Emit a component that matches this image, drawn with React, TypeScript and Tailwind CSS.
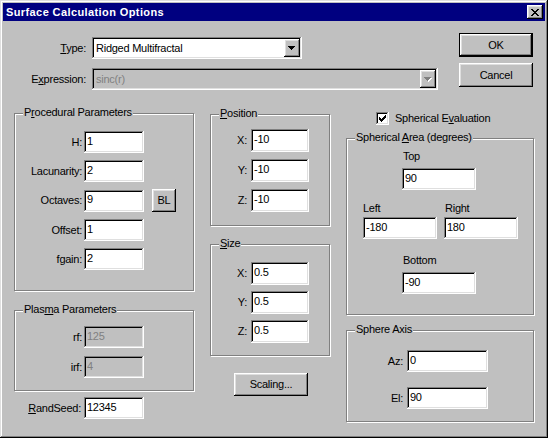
import React from 'react';

// Win95-style bevels
const raised =
  'bg-[#c0c0c0] shadow-[inset_-1px_-1px_0_#000,inset_1px_1px_0_#fff,inset_-2px_-2px_0_#808080,inset_2px_2px_0_#dfdfdf]';
const sunken =
  'shadow-[inset_-1px_-1px_0_#fff,inset_1px_1px_0_#808080,inset_-2px_-2px_0_#dfdfdf,inset_2px_2px_0_#000]';

function Field({ value, className = '', disabled = false }: { value: string; className?: string; disabled?: boolean }) {
  return (
    <div
      className={`${sunken} flex items-center pl-[3px] pb-[2px] leading-[13px] ${
        disabled ? 'bg-[#c0c0c0] text-[#808080]' : 'bg-white text-black'
      } ${className}`}
    >
      {value}
    </div>
  );
}

function Arrow({ disabled = false }: { disabled?: boolean }) {
  return (
    <svg width="8" height="5" shapeRendering="crispEdges">
      {disabled && <path fill="#fff" d="M1 1h7v1H1zM2 2h5v1H2zM3 3h3v1H3zM4 4h1v1H4z" />}
      <path fill={disabled ? '#808080' : '#000'} d="M0 0h7v1H0zM1 1h5v1H1zM2 2h3v1H2zM3 3h1v1H3z" />
    </svg>
  );
}

function Combo({ value, className = '', disabled = false }: { value: string; className?: string; disabled?: boolean }) {
  return (
    <div
      className={`${sunken} h-[22px] flex items-center p-[2px] ${
        disabled ? 'bg-[#c0c0c0] text-[#808080]' : 'bg-white text-black'
      } ${className}`}
    >
      <span className="flex-1 pl-[2px] leading-[13px]">{value}</span>
      <div className={`${raised} w-[16px] h-[18px] flex items-center justify-center`}>
        <Arrow disabled={disabled} />
      </div>
    </div>
  );
}

function Button({ children, className = '' }: { children: React.ReactNode; className?: string }) {
  return <div className={`${raised} flex items-center justify-center leading-[13px] ${className}`}>{children}</div>;
}

function Group({ title, className = '', children }: { title: React.ReactNode; className?: string; children?: React.ReactNode }) {
  return (
    <div className={`relative border border-[#808080] shadow-[inset_1px_1px_0_#fff,1px_1px_0_#fff] ${className}`}>
      <span className="absolute -top-[8px] left-[8px] bg-[#c0c0c0] px-[1px] leading-[13px] whitespace-nowrap">{title}</span>
      {children}
    </div>
  );
}

function Row({ label, labelClass, children }: { label: React.ReactNode; labelClass: string; children: React.ReactNode }) {
  return (
    <div className="flex items-center">
      <span className={`text-right leading-[13px] ${labelClass}`}>{label}</span>
      {children}
    </div>
  );
}

export default function App() {
  return (
    <div className="w-[548px] h-[438px] bg-[#c0c0c0] p-[3px] flex flex-col text-[11px] tracking-[-0.25px] text-black [font-family:'Liberation_Sans',Arial,sans-serif] shadow-[inset_-1px_-1px_0_#000,inset_1px_1px_0_#dfdfdf,inset_-2px_-2px_0_#808080,inset_2px_2px_0_#fff]">
      {/* title bar */}
      <div className="h-[18px] bg-[#000080] flex items-center justify-between pl-[3px] pr-[2px]">
        <span className="text-white font-bold leading-[13px] tracking-[0.4px]">Surface Calculation Options</span>
        <div className={`${raised} w-[16px] h-[14px] flex items-center justify-center`}>
          <svg width="8" height="7" shapeRendering="crispEdges">
            <path d="M0 0h2v1H0zM6 0h2v1H6zM1 1h2v1H1zM5 1h2v1H5zM2 2h4v1H2zM3 3h2v1H3zM2 4h4v1H2zM1 5h2v1H1zM5 5h2v1H5zM0 6h2v1H0zM6 6h2v1H6z" />
          </svg>
        </div>
      </div>

      {/* top section */}
      <div className="h-[85px] flex">
        <div className="ml-[11px] mt-[16px] flex flex-col gap-[9px]">
          <Row label={<><u>T</u>ype:</>} labelClass="w-[72px] mr-[6px]">
            <Combo value="Ridged Multifractal" className="w-[210px]" />
          </Row>
          <Row label={<>E<u>x</u>pression:</>} labelClass="w-[72px] mr-[6px]">
            <Combo value="sinc(r)" className="w-[346px]" disabled />
          </Row>
        </div>
        <div className="ml-[21px] mt-[12px] flex flex-col gap-[6px]">
          <div className="border border-black">
            <Button className="w-[72px] h-[22px]">OK</Button>
          </div>
          <Button className="w-[74px] h-[24px]">Cancel</Button>
        </div>
      </div>

      {/* main section */}
      <div className="flex ml-[11px] gap-[16px]">
        {/* column A */}
        <div className="w-[180px] flex flex-col">
          <Group title={<>P<u>r</u>ocedural Parameters</>} className="mt-[7px] h-[178px] pt-[17px]">
            <div className="flex flex-col gap-[7px]">
              <Row label="H:" labelClass="w-[69px] pr-[2px]">
                <Field value="1" className="w-[60px] h-[22px]" />
              </Row>
              <Row label="Lacunarity:" labelClass="w-[69px] pr-[2px]">
                <Field value="2" className="w-[60px] h-[22px]" />
              </Row>
              <Row label="Octaves:" labelClass="w-[69px] pr-[2px]">
                <Field value="9" className="w-[60px] h-[22px]" />
                <Button className="ml-[8px] w-[24px] h-[23px]">BL</Button>
              </Row>
              <Row label="Offset:" labelClass="w-[69px] pr-[2px]">
                <Field value="1" className="w-[60px] h-[22px]" />
              </Row>
              <Row label="fgain:" labelClass="w-[69px] pr-[2px]">
                <Field value="2" className="w-[60px] h-[22px]" />
              </Row>
            </div>
          </Group>
          <Group title={<>Plas<u>m</u>a Parameters</>} className="mt-[19px] h-[81px] pt-[15px]">
            <div className="flex flex-col gap-[8px]">
              <Row label="rf:" labelClass="w-[69px] pr-[2px]">
                <Field value="125" className="w-[60px] h-[22px]" disabled />
              </Row>
              <Row label="irf:" labelClass="w-[69px] pr-[2px]">
                <Field value="4" className="w-[60px] h-[22px]" disabled />
              </Row>
            </div>
          </Group>
          <div className="mt-[6px]">
            <Row label={<><u>R</u>andSeed:</>} labelClass="w-[70px] pr-[3px]">
              <Field value="12345" className="w-[60px] h-[22px]" />
            </Row>
          </div>
        </div>

        {/* column B */}
        <div className="w-[120px] flex flex-col">
          <Group title={<><u>P</u>osition</>} className="mt-[8px] h-[112px] pt-[14px]">
            <div className="flex flex-col gap-[7px]">
              {['X:', 'Y:', 'Z:'].map((l) => (
                <Row key={l} label={l} labelClass="w-[40px] pr-[4px]">
                  <Field value="-10" className="w-[58px] h-[23px]" />
                </Row>
              ))}
            </div>
          </Group>
          <Group title={<><u>S</u>ize</>} className="mt-[18px] h-[112px] pt-[17px]">
            <div className="flex flex-col gap-[6px]">
              {['X:', 'Y:', 'Z:'].map((l) => (
                <Row key={l} label={l} labelClass="w-[40px] pr-[4px]">
                  <Field value="0.5" className="w-[58px] h-[23px]" />
                </Row>
              ))}
            </div>
          </Group>
          <Button className="mt-[17px] ml-[24px] w-[74px] h-[23px]">Scaling...</Button>
        </div>

        {/* column C */}
        <div className="w-[188px] flex flex-col">
          <div className="mt-[6px] h-[13px] flex items-center pl-[30px] gap-[6px]">
            <div className={`${sunken} bg-white w-[13px] h-[13px] flex items-center justify-center`}>
              <svg width="7" height="7" shapeRendering="crispEdges">
                <path d="M6 0h1v1H6zM5 1h2v1H5zM0 2h1v1H0zM4 2h3v1H4zM0 3h2v1H0zM3 3h3v1H3zM0 4h5v1H0zM1 5h3v1H1zM2 6h1v1H2z" />
              </svg>
            </div>
            <span className="leading-[13px]">Spherical E<u>v</u>aluation</span>
          </div>
          <Group title={<>Spherical <u>A</u>rea (degrees)</>} className="mt-[13px] h-[177px]">
            <div className="flex flex-col">
              <span className="mt-[11px] ml-[56px] leading-[13px]">Top</span>
              <Field value="90" className="mt-[5px] ml-[55px] w-[74px] h-[22px]" />
              <div className="mt-[12px] ml-[16px] flex gap-[7px]">
                <div className="flex flex-col">
                  <span className="leading-[13px]">Left</span>
                  <Field value="-180" className="mt-[2px] w-[74px] h-[22px]" />
                </div>
                <div className="flex flex-col">
                  <span className="leading-[13px] pl-[1px]">Right</span>
                  <Field value="180" className="mt-[2px] w-[74px] h-[22px]" />
                </div>
              </div>
              <span className="mt-[15px] ml-[56px] leading-[13px]">Bottom</span>
              <Field value="-90" className="mt-[5px] ml-[55px] w-[74px] h-[22px]" />
            </div>
          </Group>
          <Group title="Sphere Axis" className="mt-[15px] h-[92px] pt-[19px]">
            <div className="flex flex-col gap-[15px]">
              <Row label="Az:" labelClass="w-[60px] pr-[4px]">
                <Field value="0" className="w-[81px] h-[22px]" />
              </Row>
              <Row label="El:" labelClass="w-[60px] pr-[4px]">
                <Field value="90" className="w-[81px] h-[22px]" />
              </Row>
            </div>
          </Group>
        </div>
      </div>
    </div>
  );
}
